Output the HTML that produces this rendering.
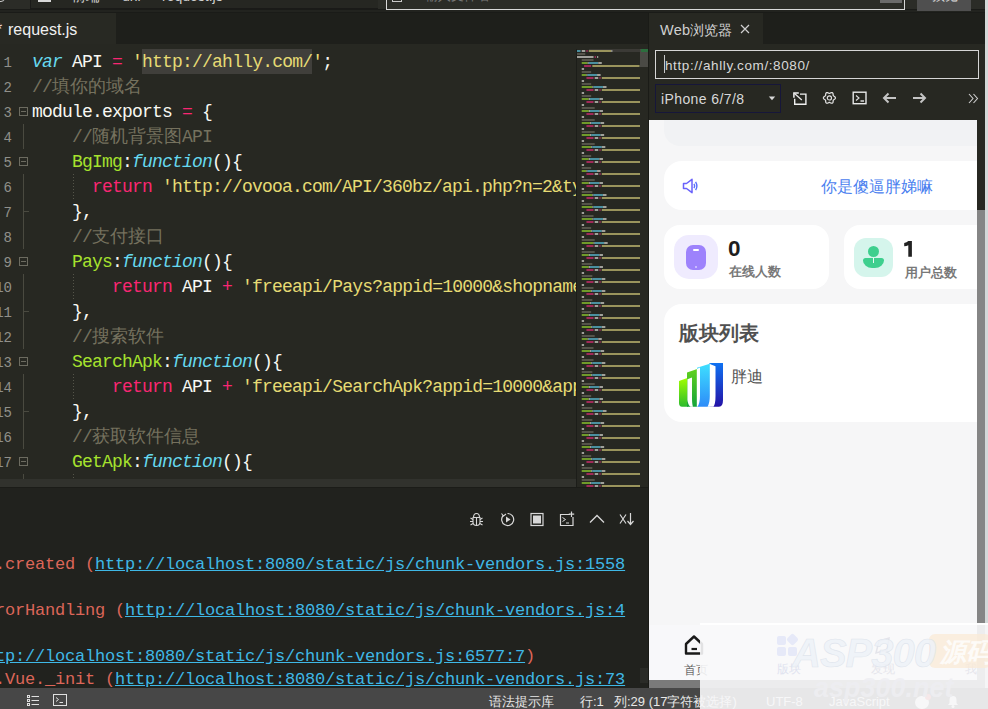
<!DOCTYPE html>
<html><head><meta charset="utf-8">
<style>
*{margin:0;padding:0;box-sizing:border-box}
html,body{width:988px;height:709px;overflow:hidden;background:#272822;font-family:"Liberation Sans",sans-serif}
.abs{position:absolute}
#top{left:0;top:0;width:988px;height:13px;background:#2b2c27;overflow:hidden}
#tabbar{left:0;top:13px;width:648px;height:31px;background:#1e1f1b}
#tab1{left:0;top:13px;width:116px;height:31px;background:#282923;color:#f0f0f0;font-size:16px;line-height:33px;padding-left:0}
#editor{left:0;top:44px;width:576px;height:435px;background:#272822;overflow:hidden}
.ln{position:absolute;left:32px;height:25px;line-height:25px;padding-top:1px;white-space:pre;font-family:"Liberation Mono",monospace;font-size:18px;letter-spacing:-0.8px;color:#f8f8f2}
.num{position:absolute;left:-20px;width:32px;text-align:right;height:25px;line-height:25px;font-family:"Liberation Mono",monospace;font-size:14px;color:#90908a}
.ki{color:#66d9ef;font-style:italic}
.d{color:#f8f8f2}.o{color:#f92672}.s{color:#e6db74}.c{color:#75715e}.n{color:#a6e22e}
.sel{}
.cjs{display:inline-block;letter-spacing:0}
.cj{display:inline-block;letter-spacing:0;font-size:18px;font-family:"Liberation Sans",sans-serif;line-height:25px;vertical-align:top;position:relative;top:-1.5px}
.fold{position:absolute;left:19px;width:9px;height:9px;border:1px solid #6c6b60}
.fold:after{content:"";position:absolute;left:1px;top:3px;width:5px;height:1px;background:#6c6b60}
.vg{position:absolute;left:23px;width:1px;background:#4a4a40}
.tick{position:absolute;left:23px;width:6px;height:1px;background:#4a4a40}
.dg{position:absolute;left:73px;width:1px;height:25px;background:repeating-linear-gradient(#55554a 0 1px,transparent 1px 3px)}
#minimap{left:576px;top:44px;width:64px;height:443px;background:#272822;overflow:hidden}
#vscroll{left:640px;top:44px;width:8px;height:443px;background:#272822}
#hscroll{left:0;top:479px;width:576px;height:8px;background:#31322d}
#console{left:0;top:487px;width:648px;height:201px;background:#21221e;overflow:hidden}
.cl{position:absolute;left:-5px;height:23px;line-height:23px;padding-top:0;white-space:pre;font-family:"Liberation Mono",monospace;font-size:17px;letter-spacing:-0.2px;color:#dc6659}
.u{color:#3fb8e6;text-decoration:underline}
#status{left:0;top:688px;width:988px;height:21px;background:#474747;color:#e8e8e8;font-size:13px}
#rpanel{left:648px;top:13px;width:340px;height:675px;background:#272822}
#preview{left:649px;top:120px;width:328px;height:560px;background:#f6f6f7;overflow:hidden}
#overlay{left:700px;top:623px;width:288px;height:86px;background:rgba(248,248,250,0.9)}
</style></head><body>
<div id="top" class="abs">
<div class="abs" style="left:0;top:9px;width:988px;height:1px;background:#1a1b18"></div>
<div class="abs" style="left:0;top:10px;width:988px;height:2px;background:#22231f"></div>
<div class="abs" style="left:0;top:12px;width:988px;height:1px;background:#1a1b18"></div>
<div class="abs" style="left:-6px;top:-8px;width:11px;height:9.5px;border:1.3px solid #c8c8c8;border-radius:4px"></div>
<div class="abs" style="left:30px;top:-10px;width:348px;height:19px;border-left:1px solid #1a1a18;border-bottom:1px solid #1a1a18;background:#262722"></div>
<div class="abs" style="left:38px;top:0;width:13px;height:2px;background:#d8d8d8"></div>
<div class="abs" style="left:72px;top:-11px;font-size:14px;line-height:14px;color:#d0d0d0;white-space:nowrap">前端</div>
<div class="abs" style="left:122px;top:-11px;font-size:14px;line-height:14px;color:#d0d0d0;white-space:nowrap">uni</div>
<div class="abs" style="left:162px;top:-11px;font-size:14px;line-height:14px;color:#d0d0d0;white-space:nowrap">request.js</div>
<div class="abs" style="left:386px;top:-10px;width:519px;height:20px;border:1px solid #d8d8d8;border-bottom-width:1.5px"></div>
<div class="abs" style="left:392px;top:-8px;width:10px;height:10px;border:1.2px solid #c8c8c8"></div>
<div class="abs" style="left:425px;top:-11px;font-size:13px;line-height:14px;color:#777;white-space:nowrap">输入文件名</div>
<div class="abs" style="left:880px;top:0;width:22px;height:3px;background:#6a6a6a"></div>
<div class="abs" style="left:917px;top:0;width:54px;height:11px;background:#4f4f4f"></div>
<div class="abs" style="left:932px;top:-11px;font-size:13px;line-height:14px;color:#e0e0e0;white-space:nowrap">预览</div>
<div class="abs" style="left:985px;top:0;width:3px;height:6px;background:#6a4fd0"></div>
<div class="abs" style="left:985px;top:6px;width:3px;height:2px;background:#222"></div>
</div>
<div id="tabbar" class="abs"></div>
<div id="tab1" class="abs"><span style="color:#e8dada;position:absolute;left:-4px;top:0">*</span><span style="position:absolute;left:8px;top:0">request.js</span></div>
<div id="editor" class="abs">
<div class="abs" style="left:142px;top:5px;width:170px;height:25px;background:#403f3b"></div>
<div class="fold" style="top:63px"></div>
<div class="fold" style="top:113px"></div>
<div class="fold" style="top:213px"></div>
<div class="fold" style="top:313px"></div>
<div class="fold" style="top:413px"></div>
<div class="vg" style="top:80px;height:25px"></div>
<div class="vg" style="top:130px;height:75px"></div>
<div class="vg" style="top:230px;height:75px"></div>
<div class="vg" style="top:330px;height:75px"></div>
<div class="vg" style="top:430px;height:25px"></div>
<div class="tick" style="top:167px"></div>
<div class="tick" style="top:267px"></div>
<div class="tick" style="top:367px"></div>
<div class="dg" style="top:130px"></div>
<div class="dg" style="top:230px"></div>
<div class="dg" style="top:330px"></div>
<div class="dg" style="top:430px"></div>
<div class="ln" style="top:5px"><span class="ki">var</span> <span class="d">API</span> <span class="o">=</span> <span class="s">'</span><span class="s sel">http://ahlly.com/</span><span class="s">'</span><span class="d">;</span></div>
<div class="num" style="top:7px">1</div>
<div class="ln" style="top:30px"><span class="c">//</span><span class="c cj" style="width:90px">填你的域名</span></div>
<div class="num" style="top:32px">2</div>
<div class="ln" style="top:55px"><span class="d">module.exports</span> <span class="o">=</span> <span class="d">{</span></div>
<div class="num" style="top:57px">3</div>
<div class="ln" style="top:80px">    <span class="c">//</span><span class="c cj" style="width:90px">随机背景图</span><span class="c">API</span></div>
<div class="num" style="top:82px">4</div>
<div class="ln" style="top:105px">    <span class="n">BgImg</span><span class="d">:</span><span class="ki">function</span><span class="d">(){</span></div>
<div class="num" style="top:107px">5</div>
<div class="ln" style="top:130px">      <span class="o">return</span> <span class="s">'http://ovooa.com/API/360bz/api.php?n=2&amp;type=json'</span></div>
<div class="num" style="top:132px">6</div>
<div class="ln" style="top:155px">    <span class="d">},</span></div>
<div class="num" style="top:157px">7</div>
<div class="ln" style="top:180px">    <span class="c">//</span><span class="c cj" style="width:72px">支付接口</span></div>
<div class="num" style="top:182px">8</div>
<div class="ln" style="top:205px">    <span class="n">Pays</span><span class="d">:</span><span class="ki">function</span><span class="d">(){</span></div>
<div class="num" style="top:207px">9</div>
<div class="ln" style="top:230px">        <span class="o">return</span> <span class="d">API</span> <span class="o">+</span> <span class="s">'freeapi/Pays?appid=10000&amp;shopname=xxx'</span></div>
<div class="num" style="top:232px">10</div>
<div class="ln" style="top:255px">    <span class="d">},</span></div>
<div class="num" style="top:257px">11</div>
<div class="ln" style="top:280px">    <span class="c">//</span><span class="c cj" style="width:72px">搜索软件</span></div>
<div class="num" style="top:282px">12</div>
<div class="ln" style="top:305px">    <span class="n">SearchApk</span><span class="d">:</span><span class="ki">function</span><span class="d">(){</span></div>
<div class="num" style="top:307px">13</div>
<div class="ln" style="top:330px">        <span class="o">return</span> <span class="d">API</span> <span class="o">+</span> <span class="s">'freeapi/SearchApk?appid=10000&amp;appname=xxx'</span></div>
<div class="num" style="top:332px">14</div>
<div class="ln" style="top:355px">    <span class="d">},</span></div>
<div class="num" style="top:357px">15</div>
<div class="ln" style="top:380px">    <span class="c">//</span><span class="c cj" style="width:108px">获取软件信息</span></div>
<div class="num" style="top:382px">16</div>
<div class="ln" style="top:405px">    <span class="n">GetApk</span><span class="d">:</span><span class="ki">function</span><span class="d">(){</span></div>
<div class="num" style="top:407px">17</div>
<div class="ln" style="top:430px">        <span class="o">return</span> <span class="d">API</span> <span class="o">+</span> <span class="s">'freeapi/GetApk?appid=10000'</span></div>
<div class="num" style="top:432px">18</div>
</div>
<div id="minimap" class="abs"><div class="abs" style="left:0;top:5px;width:1px;height:438px;background:#1c1d19"></div><div class="abs" style="left:1px;top:0"><svg width="64" height="443" style="position:absolute;left:0;top:0"><rect x="12" y="5" width="51" height="3" fill="#3b3a36"/><rect x="0.00" y="6" width="3.54" height="2" fill="#4a90a0"/><rect x="4.72" y="6" width="3.54" height="2" fill="#a0a09a"/><rect x="9.44" y="6" width="1.18" height="2" fill="#a02a58"/><rect x="11.80" y="6" width="22.42" height="2" fill="#9a945c"/><rect x="34.22" y="6" width="1.18" height="2" fill="#a0a09a"/><rect x="0.00" y="9" width="8.26" height="2" fill="#55544a"/><rect x="0.00" y="12" width="16.52" height="2" fill="#a0a09a"/><rect x="17.70" y="12" width="1.18" height="2" fill="#a02a58"/><rect x="20.06" y="12" width="1.18" height="2" fill="#a0a09a"/><rect x="4.72" y="15" width="11.80" height="2" fill="#55544a"/><rect x="4.72" y="18" width="5.90" height="2" fill="#6f9a2a"/><rect x="10.62" y="18" width="1.18" height="2" fill="#a0a09a"/><rect x="11.80" y="18" width="9.44" height="2" fill="#4a90a0"/><rect x="21.24" y="18" width="3.54" height="2" fill="#a0a09a"/><rect x="7.08" y="21" width="7.08" height="2" fill="#a02a58"/><rect x="15.34" y="21" width="47.20" height="2" fill="#9a945c"/><rect x="4.72" y="24" width="2.36" height="2" fill="#a0a09a"/><rect x="4.72" y="27" width="9.44" height="2" fill="#55544a"/><rect x="4.72" y="30" width="4.72" height="2" fill="#6f9a2a"/><rect x="9.44" y="30" width="1.18" height="2" fill="#a0a09a"/><rect x="10.62" y="30" width="9.44" height="2" fill="#4a90a0"/><rect x="20.06" y="30" width="3.54" height="2" fill="#a0a09a"/><rect x="9.44" y="33" width="7.08" height="2" fill="#a02a58"/><rect x="17.70" y="33" width="3.54" height="2" fill="#a0a09a"/><rect x="22.42" y="33" width="1.18" height="2" fill="#a02a58"/><rect x="24.78" y="33" width="47.20" height="2" fill="#9a945c"/><rect x="4.72" y="36" width="2.36" height="2" fill="#a0a09a"/><rect x="4.72" y="39" width="9.44" height="2" fill="#55544a"/><rect x="4.72" y="42" width="10.62" height="2" fill="#6f9a2a"/><rect x="15.34" y="42" width="1.18" height="2" fill="#a0a09a"/><rect x="16.52" y="42" width="9.44" height="2" fill="#4a90a0"/><rect x="25.96" y="42" width="3.54" height="2" fill="#a0a09a"/><rect x="9.44" y="45" width="7.08" height="2" fill="#a02a58"/><rect x="17.70" y="45" width="3.54" height="2" fill="#a0a09a"/><rect x="22.42" y="45" width="1.18" height="2" fill="#a02a58"/><rect x="24.78" y="45" width="47.20" height="2" fill="#9a945c"/><rect x="4.72" y="48" width="2.36" height="2" fill="#a0a09a"/><rect x="4.72" y="51" width="9.44" height="2" fill="#55544a"/><rect x="4.72" y="54" width="7.08" height="2" fill="#6f9a2a"/><rect x="11.80" y="54" width="1.18" height="2" fill="#a0a09a"/><rect x="12.98" y="54" width="9.44" height="2" fill="#4a90a0"/><rect x="22.42" y="54" width="3.54" height="2" fill="#a0a09a"/><rect x="9.44" y="57" width="7.08" height="2" fill="#a02a58"/><rect x="17.70" y="57" width="3.54" height="2" fill="#a0a09a"/><rect x="22.42" y="57" width="1.18" height="2" fill="#a02a58"/><rect x="24.78" y="57" width="47.20" height="2" fill="#9a945c"/><rect x="4.72" y="60" width="2.36" height="2" fill="#a0a09a"/><rect x="4.72" y="63" width="12.98" height="2" fill="#55544a"/><rect x="4.72" y="66" width="7.08" height="2" fill="#6f9a2a"/><rect x="11.80" y="66" width="1.18" height="2" fill="#a0a09a"/><rect x="12.98" y="66" width="9.44" height="2" fill="#4a90a0"/><rect x="22.42" y="66" width="3.54" height="2" fill="#a0a09a"/><rect x="9.44" y="69" width="7.08" height="2" fill="#a02a58"/><rect x="17.70" y="69" width="3.54" height="2" fill="#a0a09a"/><rect x="22.42" y="69" width="1.18" height="2" fill="#a02a58"/><rect x="24.78" y="69" width="47.20" height="2" fill="#9a945c"/><rect x="4.72" y="72" width="2.36" height="2" fill="#a0a09a"/><rect x="4.72" y="75" width="12.98" height="2" fill="#55544a"/><rect x="4.72" y="78" width="8.26" height="2" fill="#6f9a2a"/><rect x="12.98" y="78" width="1.18" height="2" fill="#a0a09a"/><rect x="14.16" y="78" width="9.44" height="2" fill="#4a90a0"/><rect x="23.60" y="78" width="3.54" height="2" fill="#a0a09a"/><rect x="9.44" y="81" width="7.08" height="2" fill="#a02a58"/><rect x="17.70" y="81" width="3.54" height="2" fill="#a0a09a"/><rect x="22.42" y="81" width="1.18" height="2" fill="#a02a58"/><rect x="24.78" y="81" width="47.20" height="2" fill="#9a945c"/><rect x="4.72" y="84" width="2.36" height="2" fill="#a0a09a"/><rect x="4.72" y="87" width="12.98" height="2" fill="#55544a"/><rect x="4.72" y="90" width="8.26" height="2" fill="#6f9a2a"/><rect x="12.98" y="90" width="1.18" height="2" fill="#a0a09a"/><rect x="14.16" y="90" width="9.44" height="2" fill="#4a90a0"/><rect x="23.60" y="90" width="3.54" height="2" fill="#a0a09a"/><rect x="9.44" y="93" width="7.08" height="2" fill="#a02a58"/><rect x="17.70" y="93" width="3.54" height="2" fill="#a0a09a"/><rect x="22.42" y="93" width="1.18" height="2" fill="#a02a58"/><rect x="24.78" y="93" width="47.20" height="2" fill="#9a945c"/><rect x="4.72" y="96" width="2.36" height="2" fill="#a0a09a"/><rect x="4.72" y="99" width="12.98" height="2" fill="#55544a"/><rect x="4.72" y="102" width="9.44" height="2" fill="#6f9a2a"/><rect x="14.16" y="102" width="1.18" height="2" fill="#a0a09a"/><rect x="15.34" y="102" width="9.44" height="2" fill="#4a90a0"/><rect x="24.78" y="102" width="3.54" height="2" fill="#a0a09a"/><rect x="9.44" y="105" width="7.08" height="2" fill="#a02a58"/><rect x="17.70" y="105" width="3.54" height="2" fill="#a0a09a"/><rect x="22.42" y="105" width="1.18" height="2" fill="#a02a58"/><rect x="24.78" y="105" width="47.20" height="2" fill="#9a945c"/><rect x="4.72" y="108" width="2.36" height="2" fill="#a0a09a"/><rect x="4.72" y="111" width="9.44" height="2" fill="#55544a"/><rect x="4.72" y="114" width="7.08" height="2" fill="#6f9a2a"/><rect x="11.80" y="114" width="1.18" height="2" fill="#a0a09a"/><rect x="12.98" y="114" width="9.44" height="2" fill="#4a90a0"/><rect x="22.42" y="114" width="3.54" height="2" fill="#a0a09a"/><rect x="9.44" y="117" width="7.08" height="2" fill="#a02a58"/><rect x="17.70" y="117" width="3.54" height="2" fill="#a0a09a"/><rect x="22.42" y="117" width="1.18" height="2" fill="#a02a58"/><rect x="24.78" y="117" width="47.20" height="2" fill="#9a945c"/><rect x="4.72" y="120" width="2.36" height="2" fill="#a0a09a"/><rect x="4.72" y="123" width="9.44" height="2" fill="#55544a"/><rect x="4.72" y="126" width="4.72" height="2" fill="#6f9a2a"/><rect x="9.44" y="126" width="1.18" height="2" fill="#a0a09a"/><rect x="10.62" y="126" width="9.44" height="2" fill="#4a90a0"/><rect x="20.06" y="126" width="3.54" height="2" fill="#a0a09a"/><rect x="9.44" y="129" width="7.08" height="2" fill="#a02a58"/><rect x="17.70" y="129" width="3.54" height="2" fill="#a0a09a"/><rect x="22.42" y="129" width="1.18" height="2" fill="#a02a58"/><rect x="24.78" y="129" width="47.20" height="2" fill="#9a945c"/><rect x="4.72" y="132" width="2.36" height="2" fill="#a0a09a"/><rect x="4.72" y="135" width="12.98" height="2" fill="#55544a"/><rect x="4.72" y="138" width="7.08" height="2" fill="#6f9a2a"/><rect x="11.80" y="138" width="1.18" height="2" fill="#a0a09a"/><rect x="12.98" y="138" width="9.44" height="2" fill="#4a90a0"/><rect x="22.42" y="138" width="3.54" height="2" fill="#a0a09a"/><rect x="9.44" y="141" width="7.08" height="2" fill="#a02a58"/><rect x="17.70" y="141" width="3.54" height="2" fill="#a0a09a"/><rect x="22.42" y="141" width="1.18" height="2" fill="#a02a58"/><rect x="24.78" y="141" width="47.20" height="2" fill="#9a945c"/><rect x="4.72" y="144" width="2.36" height="2" fill="#a0a09a"/><rect x="4.72" y="147" width="10.62" height="2" fill="#55544a"/><rect x="4.72" y="150" width="10.62" height="2" fill="#6f9a2a"/><rect x="15.34" y="150" width="1.18" height="2" fill="#a0a09a"/><rect x="16.52" y="150" width="9.44" height="2" fill="#4a90a0"/><rect x="25.96" y="150" width="3.54" height="2" fill="#a0a09a"/><rect x="9.44" y="153" width="7.08" height="2" fill="#a02a58"/><rect x="17.70" y="153" width="3.54" height="2" fill="#a0a09a"/><rect x="22.42" y="153" width="1.18" height="2" fill="#a02a58"/><rect x="24.78" y="153" width="47.20" height="2" fill="#9a945c"/><rect x="4.72" y="156" width="2.36" height="2" fill="#a0a09a"/><rect x="4.72" y="159" width="10.62" height="2" fill="#55544a"/><rect x="4.72" y="162" width="10.62" height="2" fill="#6f9a2a"/><rect x="15.34" y="162" width="1.18" height="2" fill="#a0a09a"/><rect x="16.52" y="162" width="9.44" height="2" fill="#4a90a0"/><rect x="25.96" y="162" width="3.54" height="2" fill="#a0a09a"/><rect x="9.44" y="165" width="7.08" height="2" fill="#a02a58"/><rect x="17.70" y="165" width="3.54" height="2" fill="#a0a09a"/><rect x="22.42" y="165" width="1.18" height="2" fill="#a02a58"/><rect x="24.78" y="165" width="47.20" height="2" fill="#9a945c"/><rect x="4.72" y="168" width="2.36" height="2" fill="#a0a09a"/><rect x="4.72" y="171" width="11.80" height="2" fill="#55544a"/><rect x="4.72" y="174" width="10.62" height="2" fill="#6f9a2a"/><rect x="15.34" y="174" width="1.18" height="2" fill="#a0a09a"/><rect x="16.52" y="174" width="9.44" height="2" fill="#4a90a0"/><rect x="25.96" y="174" width="3.54" height="2" fill="#a0a09a"/><rect x="9.44" y="177" width="7.08" height="2" fill="#a02a58"/><rect x="17.70" y="177" width="3.54" height="2" fill="#a0a09a"/><rect x="22.42" y="177" width="1.18" height="2" fill="#a02a58"/><rect x="24.78" y="177" width="47.20" height="2" fill="#9a945c"/><rect x="4.72" y="180" width="2.36" height="2" fill="#a0a09a"/><rect x="4.72" y="183" width="9.44" height="2" fill="#55544a"/><rect x="4.72" y="186" width="9.44" height="2" fill="#6f9a2a"/><rect x="14.16" y="186" width="1.18" height="2" fill="#a0a09a"/><rect x="15.34" y="186" width="9.44" height="2" fill="#4a90a0"/><rect x="24.78" y="186" width="3.54" height="2" fill="#a0a09a"/><rect x="9.44" y="189" width="7.08" height="2" fill="#a02a58"/><rect x="17.70" y="189" width="3.54" height="2" fill="#a0a09a"/><rect x="22.42" y="189" width="1.18" height="2" fill="#a02a58"/><rect x="24.78" y="189" width="47.20" height="2" fill="#9a945c"/><rect x="4.72" y="192" width="2.36" height="2" fill="#a0a09a"/><rect x="4.72" y="195" width="12.98" height="2" fill="#55544a"/><rect x="4.72" y="198" width="11.80" height="2" fill="#6f9a2a"/><rect x="16.52" y="198" width="1.18" height="2" fill="#a0a09a"/><rect x="17.70" y="198" width="9.44" height="2" fill="#4a90a0"/><rect x="27.14" y="198" width="3.54" height="2" fill="#a0a09a"/><rect x="9.44" y="201" width="7.08" height="2" fill="#a02a58"/><rect x="17.70" y="201" width="3.54" height="2" fill="#a0a09a"/><rect x="22.42" y="201" width="1.18" height="2" fill="#a02a58"/><rect x="24.78" y="201" width="47.20" height="2" fill="#9a945c"/><rect x="4.72" y="204" width="2.36" height="2" fill="#a0a09a"/><rect x="4.72" y="207" width="12.98" height="2" fill="#55544a"/><rect x="4.72" y="210" width="7.08" height="2" fill="#6f9a2a"/><rect x="11.80" y="210" width="1.18" height="2" fill="#a0a09a"/><rect x="12.98" y="210" width="9.44" height="2" fill="#4a90a0"/><rect x="22.42" y="210" width="3.54" height="2" fill="#a0a09a"/><rect x="9.44" y="213" width="7.08" height="2" fill="#a02a58"/><rect x="17.70" y="213" width="3.54" height="2" fill="#a0a09a"/><rect x="22.42" y="213" width="1.18" height="2" fill="#a02a58"/><rect x="24.78" y="213" width="47.20" height="2" fill="#9a945c"/><rect x="4.72" y="216" width="2.36" height="2" fill="#a0a09a"/><rect x="4.72" y="219" width="10.62" height="2" fill="#55544a"/><rect x="4.72" y="222" width="7.08" height="2" fill="#6f9a2a"/><rect x="11.80" y="222" width="1.18" height="2" fill="#a0a09a"/><rect x="12.98" y="222" width="9.44" height="2" fill="#4a90a0"/><rect x="22.42" y="222" width="3.54" height="2" fill="#a0a09a"/><rect x="9.44" y="225" width="7.08" height="2" fill="#a02a58"/><rect x="17.70" y="225" width="3.54" height="2" fill="#a0a09a"/><rect x="22.42" y="225" width="1.18" height="2" fill="#a02a58"/><rect x="24.78" y="225" width="47.20" height="2" fill="#9a945c"/><rect x="4.72" y="228" width="2.36" height="2" fill="#a0a09a"/><rect x="4.72" y="231" width="10.62" height="2" fill="#55544a"/><rect x="4.72" y="234" width="9.44" height="2" fill="#6f9a2a"/><rect x="14.16" y="234" width="1.18" height="2" fill="#a0a09a"/><rect x="15.34" y="234" width="9.44" height="2" fill="#4a90a0"/><rect x="24.78" y="234" width="3.54" height="2" fill="#a0a09a"/><rect x="9.44" y="237" width="7.08" height="2" fill="#a02a58"/><rect x="17.70" y="237" width="3.54" height="2" fill="#a0a09a"/><rect x="22.42" y="237" width="1.18" height="2" fill="#a02a58"/><rect x="24.78" y="237" width="47.20" height="2" fill="#9a945c"/><rect x="4.72" y="240" width="2.36" height="2" fill="#a0a09a"/><rect x="4.72" y="243" width="11.80" height="2" fill="#55544a"/><rect x="4.72" y="246" width="9.44" height="2" fill="#6f9a2a"/><rect x="14.16" y="246" width="1.18" height="2" fill="#a0a09a"/><rect x="15.34" y="246" width="9.44" height="2" fill="#4a90a0"/><rect x="24.78" y="246" width="3.54" height="2" fill="#a0a09a"/><rect x="9.44" y="249" width="7.08" height="2" fill="#a02a58"/><rect x="17.70" y="249" width="3.54" height="2" fill="#a0a09a"/><rect x="22.42" y="249" width="1.18" height="2" fill="#a02a58"/><rect x="24.78" y="249" width="47.20" height="2" fill="#9a945c"/><rect x="4.72" y="252" width="2.36" height="2" fill="#a0a09a"/><rect x="4.72" y="255" width="10.62" height="2" fill="#55544a"/><rect x="4.72" y="258" width="8.26" height="2" fill="#6f9a2a"/><rect x="12.98" y="258" width="1.18" height="2" fill="#a0a09a"/><rect x="14.16" y="258" width="9.44" height="2" fill="#4a90a0"/><rect x="23.60" y="258" width="3.54" height="2" fill="#a0a09a"/><rect x="9.44" y="261" width="7.08" height="2" fill="#a02a58"/><rect x="17.70" y="261" width="3.54" height="2" fill="#a0a09a"/><rect x="22.42" y="261" width="1.18" height="2" fill="#a02a58"/><rect x="24.78" y="261" width="47.20" height="2" fill="#9a945c"/><rect x="4.72" y="264" width="2.36" height="2" fill="#a0a09a"/><rect x="4.72" y="267" width="9.44" height="2" fill="#55544a"/><rect x="4.72" y="270" width="7.08" height="2" fill="#6f9a2a"/><rect x="11.80" y="270" width="1.18" height="2" fill="#a0a09a"/><rect x="12.98" y="270" width="9.44" height="2" fill="#4a90a0"/><rect x="22.42" y="270" width="3.54" height="2" fill="#a0a09a"/><rect x="9.44" y="273" width="7.08" height="2" fill="#a02a58"/><rect x="17.70" y="273" width="3.54" height="2" fill="#a0a09a"/><rect x="22.42" y="273" width="1.18" height="2" fill="#a02a58"/><rect x="24.78" y="273" width="47.20" height="2" fill="#9a945c"/><rect x="4.72" y="276" width="2.36" height="2" fill="#a0a09a"/><rect x="4.72" y="279" width="9.44" height="2" fill="#55544a"/><rect x="4.72" y="282" width="9.44" height="2" fill="#6f9a2a"/><rect x="14.16" y="282" width="1.18" height="2" fill="#a0a09a"/><rect x="15.34" y="282" width="9.44" height="2" fill="#4a90a0"/><rect x="24.78" y="282" width="3.54" height="2" fill="#a0a09a"/><rect x="9.44" y="285" width="7.08" height="2" fill="#a02a58"/><rect x="17.70" y="285" width="3.54" height="2" fill="#a0a09a"/><rect x="22.42" y="285" width="1.18" height="2" fill="#a02a58"/><rect x="24.78" y="285" width="47.20" height="2" fill="#9a945c"/><rect x="4.72" y="288" width="2.36" height="2" fill="#a0a09a"/><rect x="4.72" y="291" width="12.98" height="2" fill="#55544a"/><rect x="4.72" y="294" width="5.90" height="2" fill="#6f9a2a"/><rect x="10.62" y="294" width="1.18" height="2" fill="#a0a09a"/><rect x="11.80" y="294" width="9.44" height="2" fill="#4a90a0"/><rect x="21.24" y="294" width="3.54" height="2" fill="#a0a09a"/><rect x="9.44" y="297" width="7.08" height="2" fill="#a02a58"/><rect x="17.70" y="297" width="3.54" height="2" fill="#a0a09a"/><rect x="22.42" y="297" width="1.18" height="2" fill="#a02a58"/><rect x="24.78" y="297" width="47.20" height="2" fill="#9a945c"/><rect x="4.72" y="300" width="2.36" height="2" fill="#a0a09a"/><rect x="4.72" y="303" width="11.80" height="2" fill="#55544a"/><rect x="4.72" y="306" width="8.26" height="2" fill="#6f9a2a"/><rect x="12.98" y="306" width="1.18" height="2" fill="#a0a09a"/><rect x="14.16" y="306" width="9.44" height="2" fill="#4a90a0"/><rect x="23.60" y="306" width="3.54" height="2" fill="#a0a09a"/><rect x="9.44" y="309" width="7.08" height="2" fill="#a02a58"/><rect x="17.70" y="309" width="3.54" height="2" fill="#a0a09a"/><rect x="22.42" y="309" width="1.18" height="2" fill="#a02a58"/><rect x="24.78" y="309" width="47.20" height="2" fill="#9a945c"/><rect x="4.72" y="312" width="2.36" height="2" fill="#a0a09a"/><rect x="4.72" y="315" width="11.80" height="2" fill="#55544a"/><rect x="4.72" y="318" width="9.44" height="2" fill="#6f9a2a"/><rect x="14.16" y="318" width="1.18" height="2" fill="#a0a09a"/><rect x="15.34" y="318" width="9.44" height="2" fill="#4a90a0"/><rect x="24.78" y="318" width="3.54" height="2" fill="#a0a09a"/><rect x="9.44" y="321" width="7.08" height="2" fill="#a02a58"/><rect x="17.70" y="321" width="3.54" height="2" fill="#a0a09a"/><rect x="22.42" y="321" width="1.18" height="2" fill="#a02a58"/><rect x="24.78" y="321" width="47.20" height="2" fill="#9a945c"/><rect x="4.72" y="324" width="2.36" height="2" fill="#a0a09a"/><rect x="4.72" y="327" width="10.62" height="2" fill="#55544a"/><rect x="4.72" y="330" width="9.44" height="2" fill="#6f9a2a"/><rect x="14.16" y="330" width="1.18" height="2" fill="#a0a09a"/><rect x="15.34" y="330" width="9.44" height="2" fill="#4a90a0"/><rect x="24.78" y="330" width="3.54" height="2" fill="#a0a09a"/><rect x="9.44" y="333" width="7.08" height="2" fill="#a02a58"/><rect x="17.70" y="333" width="3.54" height="2" fill="#a0a09a"/><rect x="22.42" y="333" width="1.18" height="2" fill="#a02a58"/><rect x="24.78" y="333" width="47.20" height="2" fill="#9a945c"/><rect x="4.72" y="336" width="2.36" height="2" fill="#a0a09a"/><rect x="4.72" y="339" width="12.98" height="2" fill="#55544a"/><rect x="4.72" y="342" width="7.08" height="2" fill="#6f9a2a"/><rect x="11.80" y="342" width="1.18" height="2" fill="#a0a09a"/><rect x="12.98" y="342" width="9.44" height="2" fill="#4a90a0"/><rect x="22.42" y="342" width="3.54" height="2" fill="#a0a09a"/><rect x="9.44" y="345" width="7.08" height="2" fill="#a02a58"/><rect x="17.70" y="345" width="3.54" height="2" fill="#a0a09a"/><rect x="22.42" y="345" width="1.18" height="2" fill="#a02a58"/><rect x="24.78" y="345" width="47.20" height="2" fill="#9a945c"/><rect x="4.72" y="348" width="2.36" height="2" fill="#a0a09a"/><rect x="4.72" y="351" width="9.44" height="2" fill="#55544a"/><rect x="4.72" y="354" width="7.08" height="2" fill="#6f9a2a"/><rect x="11.80" y="354" width="1.18" height="2" fill="#a0a09a"/><rect x="12.98" y="354" width="9.44" height="2" fill="#4a90a0"/><rect x="22.42" y="354" width="3.54" height="2" fill="#a0a09a"/><rect x="9.44" y="357" width="7.08" height="2" fill="#a02a58"/><rect x="17.70" y="357" width="3.54" height="2" fill="#a0a09a"/><rect x="22.42" y="357" width="1.18" height="2" fill="#a02a58"/><rect x="24.78" y="357" width="47.20" height="2" fill="#9a945c"/><rect x="4.72" y="360" width="2.36" height="2" fill="#a0a09a"/><rect x="4.72" y="363" width="10.62" height="2" fill="#55544a"/><rect x="4.72" y="366" width="10.62" height="2" fill="#6f9a2a"/><rect x="15.34" y="366" width="1.18" height="2" fill="#a0a09a"/><rect x="16.52" y="366" width="9.44" height="2" fill="#4a90a0"/><rect x="25.96" y="366" width="3.54" height="2" fill="#a0a09a"/><rect x="9.44" y="369" width="7.08" height="2" fill="#a02a58"/><rect x="17.70" y="369" width="3.54" height="2" fill="#a0a09a"/><rect x="22.42" y="369" width="1.18" height="2" fill="#a02a58"/><rect x="24.78" y="369" width="47.20" height="2" fill="#9a945c"/><rect x="4.72" y="372" width="2.36" height="2" fill="#a0a09a"/><rect x="4.72" y="375" width="10.62" height="2" fill="#55544a"/><rect x="4.72" y="378" width="8.26" height="2" fill="#6f9a2a"/><rect x="12.98" y="378" width="1.18" height="2" fill="#a0a09a"/><rect x="14.16" y="378" width="9.44" height="2" fill="#4a90a0"/><rect x="23.60" y="378" width="3.54" height="2" fill="#a0a09a"/><rect x="9.44" y="381" width="7.08" height="2" fill="#a02a58"/><rect x="17.70" y="381" width="3.54" height="2" fill="#a0a09a"/><rect x="22.42" y="381" width="1.18" height="2" fill="#a02a58"/><rect x="24.78" y="381" width="47.20" height="2" fill="#9a945c"/><rect x="4.72" y="384" width="2.36" height="2" fill="#a0a09a"/><rect x="4.72" y="387" width="11.80" height="2" fill="#55544a"/><rect x="4.72" y="390" width="7.08" height="2" fill="#6f9a2a"/><rect x="11.80" y="390" width="1.18" height="2" fill="#a0a09a"/><rect x="12.98" y="390" width="9.44" height="2" fill="#4a90a0"/><rect x="22.42" y="390" width="3.54" height="2" fill="#a0a09a"/><rect x="9.44" y="393" width="7.08" height="2" fill="#a02a58"/><rect x="17.70" y="393" width="3.54" height="2" fill="#a0a09a"/><rect x="22.42" y="393" width="1.18" height="2" fill="#a02a58"/><rect x="24.78" y="393" width="47.20" height="2" fill="#9a945c"/><rect x="4.72" y="396" width="2.36" height="2" fill="#a0a09a"/><rect x="4.72" y="399" width="10.62" height="2" fill="#55544a"/><rect x="4.72" y="402" width="8.26" height="2" fill="#6f9a2a"/><rect x="12.98" y="402" width="1.18" height="2" fill="#a0a09a"/><rect x="14.16" y="402" width="9.44" height="2" fill="#4a90a0"/><rect x="23.60" y="402" width="3.54" height="2" fill="#a0a09a"/><rect x="9.44" y="405" width="7.08" height="2" fill="#a02a58"/><rect x="17.70" y="405" width="3.54" height="2" fill="#a0a09a"/><rect x="22.42" y="405" width="1.18" height="2" fill="#a02a58"/><rect x="24.78" y="405" width="47.20" height="2" fill="#9a945c"/><rect x="4.72" y="408" width="2.36" height="2" fill="#a0a09a"/><rect x="4.72" y="411" width="9.44" height="2" fill="#55544a"/><rect x="4.72" y="414" width="9.44" height="2" fill="#6f9a2a"/><rect x="14.16" y="414" width="1.18" height="2" fill="#a0a09a"/><rect x="15.34" y="414" width="9.44" height="2" fill="#4a90a0"/><rect x="24.78" y="414" width="3.54" height="2" fill="#a0a09a"/><rect x="9.44" y="417" width="7.08" height="2" fill="#a02a58"/><rect x="17.70" y="417" width="3.54" height="2" fill="#a0a09a"/><rect x="22.42" y="417" width="1.18" height="2" fill="#a02a58"/><rect x="24.78" y="417" width="47.20" height="2" fill="#9a945c"/><rect x="4.72" y="420" width="2.36" height="2" fill="#a0a09a"/><rect x="4.72" y="423" width="10.62" height="2" fill="#55544a"/><rect x="4.72" y="426" width="9.44" height="2" fill="#6f9a2a"/><rect x="14.16" y="426" width="1.18" height="2" fill="#a0a09a"/><rect x="15.34" y="426" width="9.44" height="2" fill="#4a90a0"/><rect x="24.78" y="426" width="3.54" height="2" fill="#a0a09a"/><rect x="9.44" y="429" width="7.08" height="2" fill="#a02a58"/><rect x="17.70" y="429" width="3.54" height="2" fill="#a0a09a"/><rect x="22.42" y="429" width="1.18" height="2" fill="#a02a58"/><rect x="24.78" y="429" width="47.20" height="2" fill="#9a945c"/><rect x="4.72" y="432" width="2.36" height="2" fill="#a0a09a"/><rect x="4.72" y="435" width="12.98" height="2" fill="#55544a"/><rect x="4.72" y="438" width="8.26" height="2" fill="#6f9a2a"/><rect x="12.98" y="438" width="1.18" height="2" fill="#a0a09a"/><rect x="14.16" y="438" width="9.44" height="2" fill="#4a90a0"/><rect x="23.60" y="438" width="3.54" height="2" fill="#a0a09a"/><rect x="9.44" y="441" width="7.08" height="2" fill="#a02a58"/><rect x="17.70" y="441" width="3.54" height="2" fill="#a0a09a"/><rect x="22.42" y="441" width="1.18" height="2" fill="#a02a58"/><rect x="24.78" y="441" width="47.20" height="2" fill="#9a945c"/><rect x="4.72" y="444" width="2.36" height="2" fill="#a0a09a"/></svg></div></div>
<div id="vscroll" class="abs"><div class="abs" style="left:0;top:5px;width:8px;height:18px;background:#4a4a45"></div><div class="abs" style="left:1px;top:5px;width:7px;height:3px;background:#2c6e3e"></div></div>
<div id="hscroll" class="abs"></div>
<div id="console" class="abs">
<div class="abs" style="left:0;top:0;width:648px;height:1px;background:#1b1c18"></div>
<div class="abs" style="left:640px;top:181px;width:8px;height:15px;background:#2a2b27"></div>
<svg class="abs" style="left:469px;top:25px" width="15" height="15"><g fill="none" stroke="#d8d8d8" stroke-width="1.1"><path d="M4.5 5.5Q4.5 1.5 7.5 1.5Q10.5 1.5 10.5 5.5"/><path d="M4 5.5H11V10Q11 13.5 7.5 13.5Q4 13.5 4 10Z"/><path d="M7.5 5.5V13.5M1.5 6L4 7.5M13.5 6L11 7.5M1 9.5H4M14 9.5H11M1.5 13L4 11.5M13.5 13L11 11.5"/></g></svg>
<svg class="abs" style="left:500px;top:25px" width="15" height="15"><path d="M3.2 3.5A6 6 0 1 0 7.5 1.5" fill="none" stroke="#d8d8d8" stroke-width="1.2"/><path d="M1.5 1.5L3.5 4L6 2" fill="none" stroke="#d8d8d8" stroke-width="1.1"/><path d="M6 4.5L10.5 7.5L6 10.5Z" fill="#d8d8d8"/></svg>
<svg class="abs" style="left:530px;top:25px" width="14" height="15"><rect x="1" y="1.5" width="12" height="12" fill="none" stroke="#d8d8d8" stroke-width="1.2"/><rect x="3" y="3.5" width="8" height="8" fill="#d8d8d8"/></svg>
<svg class="abs" style="left:559px;top:24px" width="17" height="16"><path d="M11 3.5H1.5V14.5H14V6" fill="none" stroke="#d8d8d8" stroke-width="1.2"/><path d="M12.5 0.5V6M9.8 3.2H15.2" stroke="#d8d8d8" stroke-width="1.2"/><path d="M3.5 6.5L6.5 8.5L3.5 10.5M7 12H10" fill="none" stroke="#d8d8d8" stroke-width="1"/></svg>
<svg class="abs" style="left:589px;top:26px" width="16" height="12"><path d="M1 9.5L8 2.5L15 9.5" fill="none" stroke="#d8d8d8" stroke-width="1.3"/></svg>
<svg class="abs" style="left:619px;top:25px" width="16" height="15"><path d="M1 2.5L7 11.5M7 2.5L1 11.5" stroke="#d8d8d8" stroke-width="1.2"/><path d="M11.5 1V12M8.5 9L11.5 12.5L14.5 9" fill="none" stroke="#d8d8d8" stroke-width="1.2"/></svg>
<div class="cl" style="top:66px">.created (<span class="u">http://localhost:8080/static/js/chunk-vendors.js:1558</span></div>
<div class="cl" style="top:112px">rorHandling (<span class="u">http://localhost:8080/static/js/chunk-vendors.js:4</span></div>
<div class="cl" style="top:158px"><span class="u">tp://localhost:8080/static/js/chunk-vendors.js:6577:7</span>)</div>
<div class="cl" style="top:181px">.Vue._init (<span class="u">http://localhost:8080/static/js/chunk-vendors.js:73</span></div>
</div>
<div id="status" class="abs">
<svg class="abs" style="left:26px;top:6px" width="14" height="12"><g fill="none" stroke="#e0e0e0" stroke-width="1"><rect x="1.5" y="1.5" width="2" height="2"/><rect x="1.5" y="5.5" width="2" height="2"/><rect x="1.5" y="9.5" width="2" height="2"/></g><path d="M5.5 2.5H13M5.5 6.5H13M5.5 10.5H13" stroke="#e0e0e0" stroke-width="1"/></svg>
<svg class="abs" style="left:53px;top:6px" width="14" height="12"><rect x="0.5" y="0.5" width="13" height="11" fill="none" stroke="#e0e0e0" stroke-width="1"/><path d="M3 3.5L5.5 5.5L3 7.5M6.5 8.5H10" fill="none" stroke="#e0e0e0" stroke-width="1"/></svg>
<div class="abs" style="left:489px;top:3px;height:21px;line-height:22px;font-size:13px;color:#e8e8e8;white-space:nowrap">语法提示库</div>
<div class="abs" style="left:580px;top:3px;height:21px;line-height:22px;font-size:13px;color:#e8e8e8;white-space:nowrap">行:1</div>
<div class="abs" style="left:614px;top:3px;height:21px;line-height:22px;font-size:13px;color:#e8e8e8;white-space:nowrap">列:29 (17字符被选择)</div>
<div class="abs" style="left:766px;top:3px;height:21px;line-height:22px;font-size:13px;color:#e8e8e8;white-space:nowrap">UTF-8</div>
<div class="abs" style="left:829px;top:3px;height:21px;line-height:22px;font-size:13px;color:#e8e8e8;white-space:nowrap">JavaScript</div>
<div class="abs" style="left:915px;top:7.5px;width:13.5px;height:13.5px;border-radius:50%;background:#e8e8e8"></div>
<div class="abs" style="left:925px;top:6px;width:6px;height:6px;border-radius:50%;background:#e05050"></div>
<svg class="abs" style="left:946px;top:6px" width="14" height="14"><path d="M2 11H12L10.5 9V6Q10.5 2 7 2Q3.5 2 3.5 6V9Z" fill="#e8e8e8"/><circle cx="7" cy="12.5" r="1.5" fill="#e8e8e8"/></svg>
</div>
<div id="rpanel" class="abs">
<div class="abs" style="left:0;top:0;width:1px;height:675px;background:#1a1b17"></div>
<div class="abs" style="left:115px;top:0;width:222px;height:31px;background:#1e1f1b"></div>
<div class="abs" style="left:12px;top:1.5px;height:31px;line-height:31px;font-size:14.5px;color:#d0d0d0;white-space:nowrap;letter-spacing:0.3px">Web<span class="cjs" style="width:39px;font-size:13.5px">浏览器</span></div>
<svg class="abs" style="left:92px;top:11px" width="10" height="10"><path d="M1 1L9 9M9 1L1 9" stroke="#d0d0d0" stroke-width="1.2"/></svg>
<div class="abs" style="left:7px;top:37px;width:324px;height:29px;border:1px solid #d6d6d6"></div>
<div class="abs" style="left:16px;top:42px;width:1px;height:18px;background:#c8c8c8"></div>
<div class="abs" style="left:17px;top:37.8px;height:29px;line-height:29px;font-size:13.5px;color:#d8d8d8;white-space:nowrap;letter-spacing:0.6px">http://ahlly.com/:8080/</div>
<div class="abs" style="left:7px;top:71px;width:126px;height:29px;border:1px solid #16163a"></div>
<div class="abs" style="left:13px;top:72px;height:29px;line-height:29px;font-size:14px;color:#d8d8d8;white-space:nowrap;letter-spacing:0.4px">iPhone 6/7/8</div>
<svg class="abs" style="left:118px;top:82px" width="10" height="6"><path d="M2.8 1.5H9.2L6 5.2Z" fill="#d8d8d8"/></svg>
<svg class="abs" style="left:144px;top:78px" width="16" height="16"><path d="M1.2 2.1H6.8M1.9 1.4V6.8" fill="none" stroke="#f0f0f0" stroke-width="1.5"/><path d="M2.2 2.3L9.8 9" stroke="#e8e8e8" stroke-width="1.3"/><path d="M8 3.1H13.9V13.2H2.7V7.8" fill="none" stroke="#f0f0f0" stroke-width="1.4"/></svg>
<svg class="abs" style="left:174px;top:78px" width="15" height="14"><path d="M13.40 6.90 L13.33 7.29 L13.13 7.65 L12.83 7.98 L12.47 8.26 L12.10 8.50 L11.76 8.71 L11.49 8.92 L11.30 9.15 L11.19 9.43 L11.14 9.77 L11.13 10.17 L11.11 10.61 L11.05 11.06 L10.92 11.49 L10.70 11.84 L10.40 12.10 L10.03 12.23 L9.61 12.24 L9.18 12.14 L8.76 11.97 L8.37 11.77 L8.02 11.58 L7.70 11.45 L7.40 11.40 L7.10 11.45 L6.78 11.58 L6.43 11.77 L6.04 11.97 L5.62 12.14 L5.19 12.24 L4.77 12.23 L4.40 12.10 L4.10 11.84 L3.88 11.49 L3.75 11.06 L3.69 10.61 L3.67 10.17 L3.66 9.77 L3.61 9.43 L3.50 9.15 L3.31 8.92 L3.04 8.71 L2.70 8.50 L2.33 8.26 L1.97 7.98 L1.67 7.65 L1.47 7.29 L1.40 6.90 L1.47 6.51 L1.67 6.15 L1.97 5.82 L2.33 5.54 L2.70 5.30 L3.04 5.09 L3.31 4.88 L3.50 4.65 L3.61 4.37 L3.66 4.03 L3.67 3.63 L3.69 3.19 L3.75 2.74 L3.88 2.31 L4.10 1.96 L4.40 1.70 L4.77 1.57 L5.19 1.56 L5.62 1.66 L6.04 1.83 L6.43 2.03 L6.78 2.22 L7.10 2.35 L7.40 2.40 L7.70 2.35 L8.02 2.22 L8.37 2.03 L8.76 1.83 L9.18 1.66 L9.61 1.56 L10.03 1.57 L10.40 1.70 L10.70 1.96 L10.92 2.31 L11.05 2.74 L11.11 3.19 L11.13 3.63 L11.14 4.03 L11.19 4.37 L11.30 4.65 L11.49 4.88 L11.76 5.09 L12.10 5.30 L12.47 5.54 L12.83 5.82 L13.13 6.15 L13.33 6.51Z" fill="none" stroke="#e0e0e0" stroke-width="1.25" stroke-linejoin="round"/><circle cx="7.4" cy="6.9" r="2.1" fill="none" stroke="#e0e0e0" stroke-width="1.2"/></svg>
<svg class="abs" style="left:204px;top:78px" width="16" height="14"><rect x="1.2" y="1.2" width="12.8" height="11.5" fill="none" stroke="#e8e8e8" stroke-width="1.4"/><path d="M4 4.5L7 7L4 9.5" fill="none" stroke="#e0e0e0" stroke-width="1.1"/><path d="M8.5 10H12" stroke="#e8e8e8" stroke-width="1.4"/></svg>
<svg class="abs" style="left:234px;top:79px" width="16" height="12"><path d="M14 6H2M6.5 1.5L2 6L6.5 10.5" fill="none" stroke="#c4c4c4" stroke-width="2"/></svg>
<svg class="abs" style="left:264px;top:79px" width="16" height="12"><path d="M1 6H13M8.5 1.5L13 6L8.5 10.5" fill="none" stroke="#c4c4c4" stroke-width="2"/></svg>
<svg class="abs" style="left:320px;top:80px" width="12" height="11"><path d="M1 1L5 5.5L1 10M5.5 1L9.5 5.5L5.5 10" fill="none" stroke="#d0d0d0" stroke-width="1.1"/></svg>
<div class="abs" style="left:329px;top:107px;width:8px;height:568px;background:#272822"></div>
<div class="abs" style="left:329px;top:197px;width:8px;height:470px;background:#858585"></div>
<div class="abs" style="left:337px;top:-13px;width:3px;height:688px;background:#d4d8d8"></div>
<div class="abs" style="left:1px;top:667px;width:336px;height:8px;background:#7a7a7a"></div>
</div>
<div id="preview" class="abs">
<div class="abs" style="left:15px;top:-40px;width:330px;height:66px;border-radius:16px;background:#f1f2f4"></div>
<div class="abs" style="left:15px;top:41px;width:340px;height:49px;border-radius:18px;background:#fff"></div>
<svg class="abs" style="left:33px;top:58px" width="18" height="17"><path d="M1.5 5.5H4.5L10 1.3V14.7L4.5 10.5H1.5Z" fill="none" stroke="#6a62fb" stroke-width="1.5" stroke-linejoin="round"/><path d="M12 5.8Q13.4 8 12 10.2" fill="none" stroke="#5a70fb" stroke-width="1.4"/><path d="M13.6 3.8Q16.2 8 13.6 12.2" fill="none" stroke="#5a70fb" stroke-width="1.4"/></svg>
<div class="abs" style="left:172px;top:56px;height:22px;line-height:22px;font-size:16px;color:#4a80ef;white-space:nowrap">你是傻逼胖娣嘛</div>
<div class="abs" style="left:15px;top:105px;width:165px;height:64px;border-radius:16px;background:#fff"></div>
<div class="abs" style="left:25px;top:115px;width:44px;height:44px;border-radius:15px;background:#efebfe"></div>
<div class="abs" style="left:37px;top:125px;width:20px;height:25px;border-radius:7px;background:#9d82fc"></div>
<div class="abs" style="left:44px;top:128.5px;width:6px;height:2px;border-radius:1px;background:#fff"></div>
<div class="abs" style="left:46px;top:145.5px;width:2px;height:2px;border-radius:1px;background:#d8ccff"></div>
<div class="abs" style="left:79px;top:116px;height:26px;line-height:26px;font-size:22.5px;font-weight:bold;color:#1e1e1e">0</div>
<div class="abs" style="left:80px;top:144px;height:16px;line-height:16px;font-size:13px;font-weight:bold;color:#787878;white-space:nowrap">在线人数</div>
<div class="abs" style="left:195px;top:105px;width:165px;height:64px;border-radius:16px;background:#fff"></div>
<div class="abs" style="left:205px;top:117.5px;width:39px;height:39.5px;border-radius:12px;background:#d5f5ec"></div>
<div class="abs" style="left:219px;top:126px;width:11px;height:11px;border-radius:50%;background:#3ecf8e"></div>
<div class="abs" style="left:213.6px;top:138.4px;width:21.6px;height:9.8px;border-radius:3px 3px 11px 11px / 3px 3px 9px 9px;background:#3ecf8e"></div><div class="abs" style="left:224px;top:138.4px;width:1px;height:5px;background:#e8fbf4"></div>
<svg class="abs" style="left:254px;top:120px" width="10" height="18"><path d="M5.3 1.1H8.9V16.7H5.3V5.2Q3.5 6 1.2 6.3V3Q3.8 2.4 5.3 1.1Z" fill="#222"/></svg>
<div class="abs" style="left:255.5px;top:144.5px;height:16px;line-height:16px;font-size:13px;font-weight:bold;color:#787878;white-space:nowrap">用户总数</div>
<div class="abs" style="left:15px;top:184px;width:340px;height:118px;border-radius:18px;background:#fff"></div>
<div class="abs" style="left:30px;top:200px;height:26px;line-height:26px;font-size:20px;font-weight:bold;color:#505050;white-space:nowrap">版块列表</div>
<svg class="abs" style="left:25px;top:238px" width="54" height="54"><defs>
<linearGradient id="g1" x1="0" y1="0" x2="0" y2="1"><stop offset="0" stop-color="#a2ff00"/><stop offset="1" stop-color="#2cbb2c"/></linearGradient>
<linearGradient id="g1b" x1="0" y1="0" x2="0" y2="1"><stop offset="0" stop-color="#62d11c"/><stop offset="1" stop-color="#14a43a"/></linearGradient>
<linearGradient id="g2" x1="0" y1="0" x2="0" y2="1"><stop offset="0" stop-color="#3ee0ff"/><stop offset="1" stop-color="#2e8cf8"/></linearGradient>
<linearGradient id="g3" x1="0" y1="0" x2="0" y2="1"><stop offset="0" stop-color="#0f72f2"/><stop offset="1" stop-color="#2412a6"/></linearGradient></defs>
<path d="M5 23L14 19.8V48.7H8Q5 48.7 5 45Z" fill="url(#g1)"/>
<path d="M13 14.5L23.2 11V48.7H13Z" fill="url(#g1b)"/>
<path d="M35.5 5H49V42Q49 48.7 45 48.7H36Z" fill="url(#g3)"/>
<path d="M23 9.8L36.5 5.5V48.7H23Z" fill="url(#g2)"/>
<path d="M13.4 21.2L18 19.5V40Q18 46 19 48.7H16.5Q14 47 13.4 42Z" fill="#fff"/>
<path d="M22.8 11L26 9.6V38Q26 45 23.5 48.7H22.8Z" fill="#fff"/>
<path d="M35.8 6L41.5 8.3V38Q41.5 46 39.5 48.7H33.5Q35.8 45 35.8 38Z" fill="#fff"/>
</svg>
<div class="abs" style="left:82px;top:246px;height:22px;line-height:22px;font-size:16px;color:#555;white-space:nowrap">胖迪</div>
<div class="abs" style="left:0;top:505px;width:328px;height:55px;background:#f8f8fa"></div>
<svg class="abs" style="left:35px;top:514px" width="22" height="22"><path d="M2 19.5V10L10 2.5L18 10V19.5Z" fill="none" stroke="#1a1a1a" stroke-width="2.4" stroke-linejoin="round"/><path d="M7.5 15H13" stroke="#1a1a1a" stroke-width="2.2"/></svg>
<div class="abs" style="left:35px;top:542px;height:16px;line-height:16px;font-size:12px;color:#666;white-space:nowrap">首页</div>
</div>
<div id="overlay" class="abs">
<div class="abs" style="left:0;top:0;width:288px;height:2px;background:rgba(255,255,255,0.9)"></div>
<div class="abs" style="left:77px;top:13px;width:9px;height:9px;border-radius:2px;background:#e6e9f8"></div>
<div class="abs" style="left:77px;top:24px;width:9px;height:9px;border-radius:2px;background:#e6e9f8"></div>
<div class="abs" style="left:88px;top:24px;width:9px;height:9px;border-radius:2px;background:#e6e9f8"></div>
<div class="abs" style="left:88px;top:12px;width:9px;height:9px;transform:rotate(45deg);border-radius:2px;background:#e6e9f8"></div>
<div class="abs" style="left:77px;top:38px;font-size:12px;line-height:16px;color:#e0e3f0;white-space:nowrap">版块</div>
<svg class="abs" style="left:172px;top:12px" width="22" height="22"><path d="M4 18L7 6L17 3L15 15Z" fill="none" stroke="#e4e4ea" stroke-width="1.5"/></svg><div class="abs" style="left:171px;top:38px;font-size:12px;line-height:16px;color:#e6e6ec;white-space:nowrap">发现</div>
<div class="abs" style="left:265px;top:38px;font-size:12px;line-height:16px;color:#e6e6ec;white-space:nowrap">我</div>
<div class="abs" style="left:229px;top:11px;width:62px;height:34px;border-radius:6px;background:rgba(250,234,214,0.75)"></div><div class="abs" style="left:240px;top:14px;font-size:26px;line-height:30px;font-weight:bold;font-style:italic;color:rgba(255,255,255,0.8);white-space:nowrap">源码</div>
<div class="abs" style="left:92px;top:8px;font-size:40px;line-height:44px;font-weight:bold;font-style:italic;color:rgba(238,242,248,0.85);-webkit-text-stroke:0.6px rgba(215,222,232,0.7);white-space:nowrap;letter-spacing:-1px">ASP300</div>
<div class="abs" style="left:114px;top:50px;font-size:27px;line-height:30px;font-style:italic;font-weight:bold;color:rgba(238,238,242,0.9);white-space:nowrap">asp300.net</div>
</div>
</body></html>
